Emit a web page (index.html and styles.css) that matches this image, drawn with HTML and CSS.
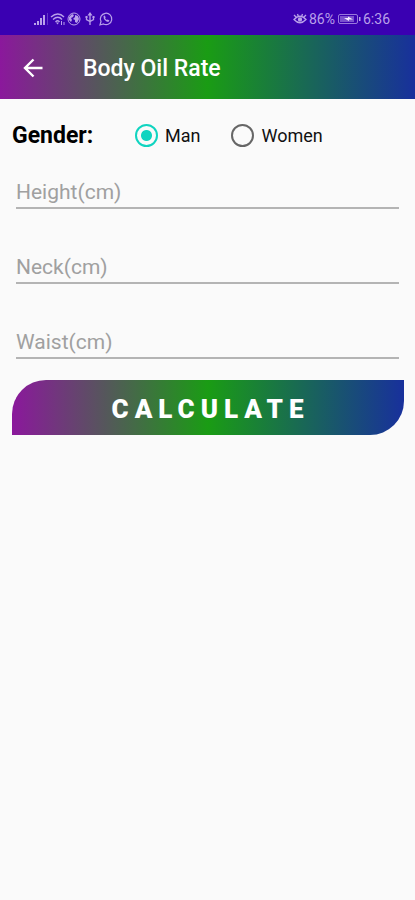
FILE: index.html
```html
<!DOCTYPE html>
<html lang="en">
<head>
<meta charset="utf-8">
<meta name="viewport" content="width=device-width, initial-scale=1">
<title>Body Oil Rate</title>
<link rel="stylesheet" href="styles.css">
</head>
<body>
<div class="status">
  <div class="status-group notifications">
    <svg width="15" height="14" viewBox="0 0 15 14" fill="currentColor" aria-hidden="true"><path d="M0 11h2v2H0zM3 9h2v4H3zM6 6h2v7H6zM9 3h2v10H9z"/><path d="M13 1h1v12h-1z" opacity=".35"/></svg>
    <svg width="16" height="14" viewBox="0 0 16 14" fill="none" stroke="currentColor" stroke-width="1.4" aria-hidden="true"><path d="M1 5Q8-1 14 5M3 7.500Q8 3 12 7.500M5.500 10Q8 7.500 9.500 10"/><path d="M6 10.500h3L7.500 12.500z" fill="currentColor" stroke="none"/><path d="M11.500 9v4M14 10v3" stroke-width="1"/></svg>
    <svg width="14" height="14" viewBox="0 0 14 14" aria-hidden="true"><circle cx="7" cy="7" r="6" fill="none" stroke="currentColor"/><path d="M2 5l3-3 2 1-1 2-2 1 1 2-1 2-2-2zM8 3l3 1 1 3-2 4-2-1V8L6 7l2-2z" fill="currentColor"/></svg>
    <svg width="16" height="14" viewBox="0 0 16 14" fill="none" stroke="currentColor" stroke-width="1.300" aria-hidden="true"><path d="M8 2v11M4.500 5v2.500L8 9.500l3.500-2V5"/><path d="M5.500 3.500L8 0l2.500 3.500zM3.500 4h2v2h-2zM10.500 4h2v2h-2z" fill="currentColor" stroke="none"/></svg>
    <svg width="14" height="14" viewBox="0 0 14 14" fill="none" stroke="currentColor" stroke-width="1.200" aria-hidden="true"><path d="M1 13l1-3.500A5.700 5.700 0 1 1 4.500 12z"/><path d="M4.500 4l1.200-.5 1 1.800-.6.900q.6 1.200 1.800 1.800l.8-.6 1.700 1-.5 1.200q-1 .7-3-.6Q4 6.700 4.500 4z" fill="currentColor" stroke="none"/></svg>
  </div>
  <div class="status-group">
    <svg width="14" height="12" viewBox="0 0 14 12" fill="none" stroke="currentColor" stroke-width="1.300" aria-hidden="true"><path d="M1 6.500Q7 0 13 6.500 7 13 1 6.500zM1 2l2 2M13 2l-2 2M4.500 1l.7 2M9.500 1l-.7 2"/><circle cx="7" cy="6.500" r="1.500" fill="currentColor"/></svg>
    <span>86%</span>
    <svg class="battery" width="23" height="12" viewBox="0 0 23 12" aria-hidden="true"><rect x=".5" y="1.500" width="19" height="9" rx="1.500" fill="none" stroke="currentColor" opacity=".75"/><path d="M2 3h14v6H2z" fill="currentColor" opacity=".5"/><path d="M6 5h4V3.500l5 3h-4V8z" fill="#f4edff"/><path d="M21 4h1.500v4H21z" fill="currentColor"/></svg>
    <span>6:36</span>
  </div>
</div>
<header class="toolbar">
  <button class="back" type="button" aria-label="Back"><svg width="20" height="20" viewBox="0 0 20 20" fill="none" stroke="currentColor" stroke-width="2.400" aria-hidden="true"><path d="M19.500 10H2M10.500 1.500L2 10l8.500 8.500"/></svg></button>
  <h1>Body Oil Rate</h1>
</header>
<main>
  <form>
    <fieldset class="gender">
      <legend class="gender-title">Gender:</legend>
      <label class="option"><input type="radio" name="gender" checked>Man</label>
      <label class="option"><input type="radio" name="gender">Women</label>
    </fieldset>
    <div class="fields">
      <input class="field" type="text" inputmode="decimal" placeholder="Height(cm)" aria-label="Height(cm)">
      <input class="field" type="text" inputmode="decimal" placeholder="Neck(cm)" aria-label="Neck(cm)">
      <input class="field" type="text" inputmode="decimal" placeholder="Waist(cm)" aria-label="Waist(cm)">
    </div>
    <button class="calculate" type="button">CALCULATE</button>
  </form>
</main>
</body>
</html>
```
FILE: styles.css
```css
:root {
  --gradient: linear-gradient(90deg, #8b189c, #1a9c14 50%, #18309c);
}

* {
  box-sizing: border-box;
}

body {
  margin: 0;
  min-height: 100vh;
  background: #fafafa;
  color: #111;
  font-family: Roboto, sans-serif;
}

.status {
  display: flex;
  align-items: center;
  justify-content: space-between;
  height: 35px;
  padding: 2px 25px 0 34px;
  background: #3a00b2;
  color: #b9a0ea;
  font-size: 14px;
}

.status-group {
  display: flex;
  align-items: center;
  gap: 2px;
}

.notifications {
  gap: 1px;
}

.battery {
  margin-left: 1px;
}

.toolbar {
  display: flex;
  align-items: center;
  gap: 40px;
  height: 64px;
  padding: 2px 23px 0;
  background: var(--gradient);
  color: #fff;
}

.back {
  display: flex;
  padding: 0;
  border: 0;
  background: none;
  color: inherit;
}

h1 {
  margin: 0;
  font-size: 23px;
  font-weight: 500;
}

form {
  padding: 12px 11px 0 12px;
}

.gender {
  display: flex;
  align-items: center;
  gap: 31px;
  height: 48px;
  margin: 0;
  padding: 0;
  border: 0;
}

.gender-title {
  float: left;
  width: 92px;
  padding: 0;
  color: #000;
  font-size: 23px;
  font-weight: 700;
}

.option {
  display: flex;
  align-items: center;
  gap: 7px;
  font-size: 18px;
}

.option input {
  appearance: none;
  width: 23px;
  height: 23px;
  margin: 0;
  border: 2px solid #666;
  border-radius: 50%;
}

.option input:checked {
  border-color: #10d4c0;
  background: radial-gradient(circle, #10d4c0 5px, transparent 6px);
}

.fields {
  display: grid;
  gap: 42px;
  padding: 17px 5px 21px 4px;
}

.field {
  width: 100%;
  height: 33px;
  padding: 0;
  border: 0;
  border-bottom: 2px solid #b4b4b4;
  border-radius: 0;
  outline: 0;
  background: none;
  font: 21px Roboto, sans-serif;
}

.field::placeholder {
  color: #a0a0a0;
}

.calculate {
  display: block;
  width: 100%;
  height: 55px;
  padding: 2px 0 0 5px;
  border: 0;
  border-radius: 34px 0;
  background: var(--gradient);
  color: #fff;
  font: 900 26px Roboto, sans-serif;
  letter-spacing: 6px;
}
```
